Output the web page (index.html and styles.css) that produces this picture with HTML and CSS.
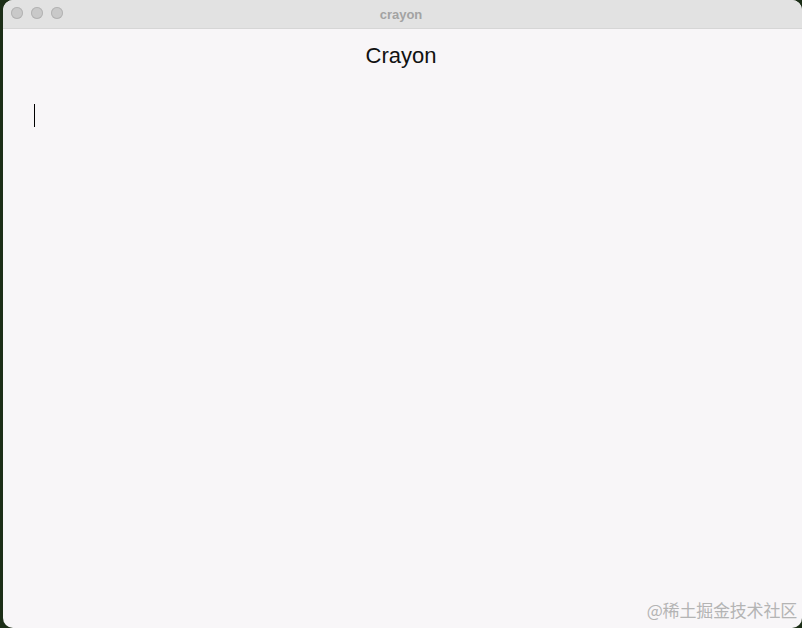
FILE: index.html
```html
<!DOCTYPE html>
<html lang="zh">
<head>
  <meta charset="UTF-8" />
  <title>crayon</title>
  <link rel="stylesheet" href="styles.css">
</head>
<body>
  <div class="window">
    <header class="titlebar">
      <div class="lights">
        <span class="light"></span>
        <span class="light"></span>
        <span class="light"></span>
      </div>
      <div class="title">crayon</div>
    </header>
    <main class="content">
      <h1>Crayon</h1>
      <div class="editor"><span class="caret"></span></div>
    </main>
    <div class="watermark">@稀土掘金技术社区</div>
  </div>
</body>
</html>
```

FILE: styles.css
```css
html, body {
  margin: 0;
  padding: 0;
  height: 100%;
}

body {
  background-color: #1c2e17;
  font-family: "Helvetica Neue", "Liberation Sans", Arial, sans-serif;
  padding-left: 3px;
  box-sizing: border-box;
  overflow: hidden;
}

.window {
  position: relative;
  height: 628px;
  background-color: #f8f6f8;
  border-radius: 10px;
  overflow: hidden;
  display: flex;
  flex-direction: column;
}

.titlebar {
  position: relative;
  height: 28px;
  flex: none;
  background-color: #e2e2e2;
  border-bottom: 1px solid #d6d6d6;
  display: flex;
  align-items: center;
  justify-content: center;
}

.lights {
  position: absolute;
  left: 8px;
  top: 7px;
  display: flex;
  gap: 8px;
}

.light {
  width: 12px;
  height: 12px;
  border-radius: 50%;
  background-color: #c9c9c9;
  box-shadow: inset 0 0 0 1px #b3b3b3;
}

.title {
  font-size: 13px;
  font-weight: bold;
  color: #a3a3a3;
  margin-right: 3px;
}

.content {
  flex: 1;
}

h1 {
  margin: 13px 0 0;
  text-align: center;
  font-size: 22px;
  font-weight: normal;
  color: #111;
  line-height: 28px;
  padding-right: 3px;
}

.editor {
  padding: 34px 0 0 31px;
  height: 24px;
}

.caret {
  display: block;
  width: 1px;
  height: 23px;
  background-color: #000;
}

.watermark {
  position: absolute;
  right: 5px;
  bottom: 6px;
  font-family: "Noto Sans CJK SC", sans-serif;
  font-size: 17px;
  color: #b4b4b4;
  letter-spacing: -0.2px;
}
```
